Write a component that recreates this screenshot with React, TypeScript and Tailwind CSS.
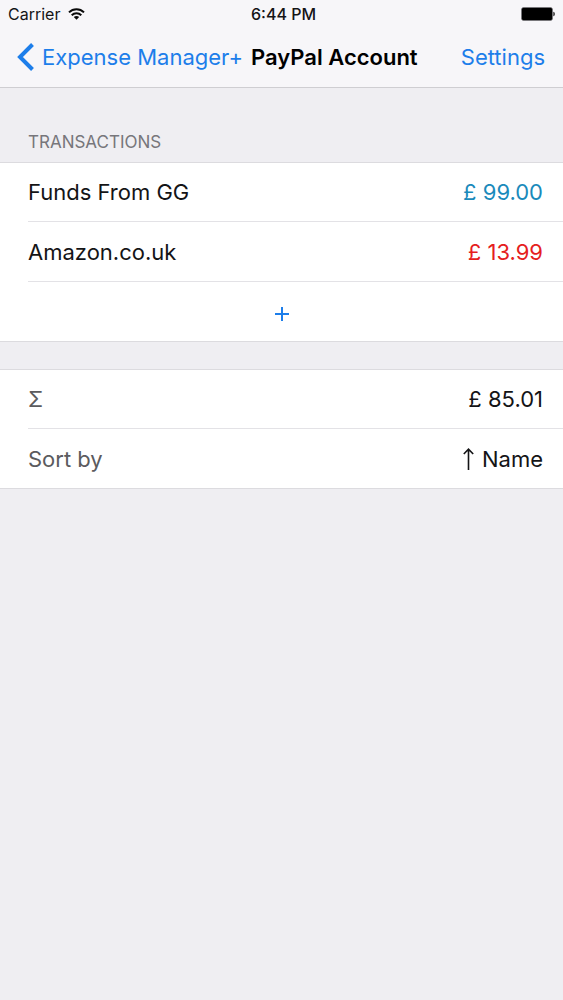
import type { ReactNode } from "react";

function WifiIcon() {
  return (
    <svg viewBox="0 0 17 12" className="h-3 w-[17px]" fill="none" stroke="#0a0a0a" strokeWidth="2" aria-hidden="true">
      <path d="M1 4.4C5.2 0.2 11.8 0.2 16 4.4" />
      <path d="M3.7 7.2C6.4 4.6 10.6 4.6 13.3 7.2" />
      <path d="M8.5 11.8L5.8 9.1C7.3 7.7 9.7 7.7 11.2 9.1Z" fill="#0a0a0a" stroke="none" />
    </svg>
  );
}

function BatteryIcon() {
  return (
    <svg viewBox="0 0 34 14" className="h-3.5 w-[34px]" aria-hidden="true">
      <rect x="0.5" y="0.5" width="31" height="13" rx="2" fill="#000" stroke="#77757a" strokeWidth="0.6" />
      <path d="M32.4 4.8C34.2 5.2 34.2 8.8 32.4 9.2Z" fill="#111" />
    </svg>
  );
}

function Group({ children }: { children: ReactNode }) {
  return <ul className="border-y border-[#dcdbdf] bg-white">{children}</ul>;
}

function Row({ children }: { children: ReactNode }) {
  return (
    <li className="group pl-7">
      <div className="flex h-[60px] items-center justify-between border-b border-[#e3e2e6] pr-5 group-first:h-[59px] group-last:h-[59px] group-last:border-b-0">
        {children}
      </div>
    </li>
  );
}

const transactions = [
  { name: "Funds From GG", amount: "£ 99.00", color: "text-[#1a8abb]" },
  { name: "Amazon.co.uk", amount: "£ 13.99", color: "text-[#e5201d]" },
];

export default function App() {
  return (
    <div className="min-h-screen bg-[#efeef2] font-[Inter,'Liberation_Sans',sans-serif] text-[22px] leading-7 text-[#141416]">
      <header className="border-b border-[#cfced2] bg-[#f7f6f9]">
        <div className="grid h-7 grid-cols-3 items-center px-2 text-base">
          <div className="flex items-center gap-2">
            <span>Carrier</span>
            <WifiIcon />
          </div>
          <time className="pl-1 text-center font-medium">6:44 PM</time>
          <div className="flex justify-end">
            <BatteryIcon />
          </div>
        </div>
        <nav className="flex h-[59px] items-center pr-[18px] pb-0.5 pl-4 whitespace-nowrap">
          <button type="button" className="flex items-center gap-2 text-[#1d7eea]">
            <svg viewBox="0 0 18 28" className="h-7 w-[18px]" fill="none" stroke="currentColor" strokeWidth="4" aria-hidden="true">
              <path d="M16.5 1.5L4 14L16.5 26.5" />
            </svg>
            Expense Manager+
          </button>
          <h1 className="ml-2 font-semibold text-black">PayPal Account</h1>
          <button type="button" className="ml-auto text-[#1d7eea]">
            Settings
          </button>
        </nav>
      </header>

      <main>
        <h2 className="px-7 pt-[42px] pb-2 text-[17px] leading-6 text-[#77767b]">TRANSACTIONS</h2>
        <Group>
          {transactions.map((item) => (
            <Row key={item.name}>
              <span>{item.name}</span>
              <span className={item.color}>{item.amount}</span>
            </Row>
          ))}
          <li>
            <button type="button" aria-label="Add transaction" className="flex h-[59px] w-full items-center justify-center pt-1 text-[#1d7eea]">
              <svg viewBox="0 0 14 14" className="size-3.5" stroke="currentColor" strokeWidth="2" aria-hidden="true">
                <path d="M7 0V14M0 7H14" />
              </svg>
            </button>
          </li>
        </Group>

        <div className="mt-[27px]">
          <Group>
            <Row>
              <span className="text-[#5b5b5e]">Σ</span>
              <span>£ 85.01</span>
            </Row>
            <Row>
              <span className="text-[#5b5b5e]">Sort by</span>
              <button type="button" className="flex items-center gap-2">
                <svg viewBox="0 0 11 22" className="h-[22px] w-[11px]" fill="none" stroke="currentColor" strokeWidth="1.6" aria-hidden="true">
                  <path d="M5.5 22V1.2M0.8 6L5.5 1.2L10.2 6" />
                </svg>
                Name
              </button>
            </Row>
          </Group>
        </div>
      </main>
    </div>
  );
}
